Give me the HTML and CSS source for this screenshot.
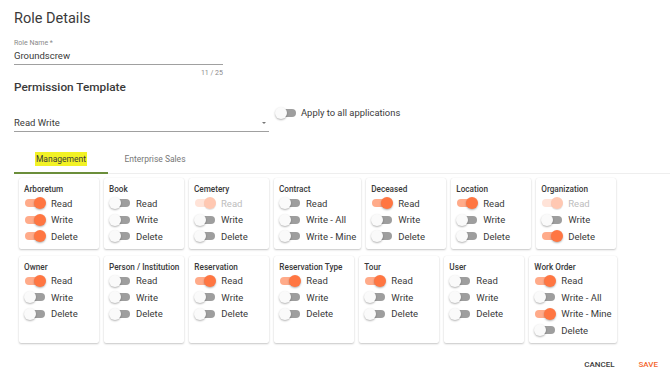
FILE: index.html
```html
<!DOCTYPE html>
<html lang="en">
<head>
    <meta charset="UTF-8">
    <meta name="viewport" content="width=device-width, initial-scale=1.0">
    <title>Role Details</title>
    <link rel="stylesheet" href="styles.css">
</head>
<body>
    <div class="page">
        <h1 class="title">Role Details</h1>

        <div class="field role-name">
            <label class="field-label">Role Name *</label>
            <div class="field-input">Groundscrew</div>
            <div class="counter">11 / 25</div>
        </div>

        <h2 class="subtitle">Permission Template</h2>

        <div class="template-row">
            <div class="field select">
                <div class="field-input">
                    <span>Read Write</span>
                    <span class="caret"></span>
                </div>
            </div>
            <div class="apply">
                <span class="switch"><span class="thumb"></span></span>
                <span class="apply-label">Apply to all applications</span>
            </div>
        </div>

        <div class="tabs">
            <div class="tab active"><span class="marker">Management</span></div>
            <div class="tab">Enterprise Sales</div>
        </div>

        <div class="cards">
            <!-- row 1 -->
            <div class="card">
                <div class="card-title">Arboretum</div>
                <div class="perm"><span class="switch on"><span class="thumb"></span></span>Read</div>
                <div class="perm"><span class="switch on"><span class="thumb"></span></span>Write</div>
                <div class="perm"><span class="switch on"><span class="thumb"></span></span>Delete</div>
            </div>
            <div class="card">
                <div class="card-title">Book</div>
                <div class="perm"><span class="switch"><span class="thumb"></span></span>Read</div>
                <div class="perm"><span class="switch"><span class="thumb"></span></span>Write</div>
                <div class="perm"><span class="switch"><span class="thumb"></span></span>Delete</div>
            </div>
            <div class="card">
                <div class="card-title">Cemetery</div>
                <div class="perm disabled"><span class="switch on"><span class="thumb"></span></span>Read</div>
                <div class="perm"><span class="switch"><span class="thumb"></span></span>Write</div>
                <div class="perm"><span class="switch"><span class="thumb"></span></span>Delete</div>
            </div>
            <div class="card">
                <div class="card-title">Contract</div>
                <div class="perm"><span class="switch"><span class="thumb"></span></span>Read</div>
                <div class="perm"><span class="switch"><span class="thumb"></span></span>Write - All</div>
                <div class="perm"><span class="switch"><span class="thumb"></span></span>Write - Mine</div>
            </div>
            <div class="card">
                <div class="card-title">Deceased</div>
                <div class="perm"><span class="switch on"><span class="thumb"></span></span>Read</div>
                <div class="perm"><span class="switch"><span class="thumb"></span></span>Write</div>
                <div class="perm"><span class="switch"><span class="thumb"></span></span>Delete</div>
            </div>
            <div class="card">
                <div class="card-title">Location</div>
                <div class="perm"><span class="switch on"><span class="thumb"></span></span>Read</div>
                <div class="perm"><span class="switch"><span class="thumb"></span></span>Write</div>
                <div class="perm"><span class="switch"><span class="thumb"></span></span>Delete</div>
            </div>
            <div class="card">
                <div class="card-title">Organization</div>
                <div class="perm disabled"><span class="switch on"><span class="thumb"></span></span>Read</div>
                <div class="perm"><span class="switch"><span class="thumb"></span></span>Write</div>
                <div class="perm"><span class="switch on"><span class="thumb"></span></span>Delete</div>
            </div>

            <!-- row 2 -->
            <div class="card">
                <div class="card-title">Owner</div>
                <div class="perm"><span class="switch on"><span class="thumb"></span></span>Read</div>
                <div class="perm"><span class="switch"><span class="thumb"></span></span>Write</div>
                <div class="perm"><span class="switch"><span class="thumb"></span></span>Delete</div>
            </div>
            <div class="card">
                <div class="card-title">Person / Institution</div>
                <div class="perm"><span class="switch"><span class="thumb"></span></span>Read</div>
                <div class="perm"><span class="switch"><span class="thumb"></span></span>Write</div>
                <div class="perm"><span class="switch"><span class="thumb"></span></span>Delete</div>
            </div>
            <div class="card">
                <div class="card-title">Reservation</div>
                <div class="perm"><span class="switch on"><span class="thumb"></span></span>Read</div>
                <div class="perm"><span class="switch"><span class="thumb"></span></span>Write</div>
                <div class="perm"><span class="switch"><span class="thumb"></span></span>Delete</div>
            </div>
            <div class="card">
                <div class="card-title">Reservation Type</div>
                <div class="perm"><span class="switch on"><span class="thumb"></span></span>Read</div>
                <div class="perm"><span class="switch"><span class="thumb"></span></span>Write</div>
                <div class="perm"><span class="switch"><span class="thumb"></span></span>Delete</div>
            </div>
            <div class="card">
                <div class="card-title">Tour</div>
                <div class="perm"><span class="switch on"><span class="thumb"></span></span>Read</div>
                <div class="perm"><span class="switch"><span class="thumb"></span></span>Write</div>
                <div class="perm"><span class="switch"><span class="thumb"></span></span>Delete</div>
            </div>
            <div class="card">
                <div class="card-title">User</div>
                <div class="perm"><span class="switch"><span class="thumb"></span></span>Read</div>
                <div class="perm"><span class="switch"><span class="thumb"></span></span>Write</div>
                <div class="perm"><span class="switch"><span class="thumb"></span></span>Delete</div>
            </div>
            <div class="card">
                <div class="card-title">Work Order</div>
                <div class="perm"><span class="switch on"><span class="thumb"></span></span>Read</div>
                <div class="perm"><span class="switch"><span class="thumb"></span></span>Write - All</div>
                <div class="perm"><span class="switch on"><span class="thumb"></span></span>Write - Mine</div>
                <div class="perm"><span class="switch"><span class="thumb"></span></span>Delete</div>
            </div>
        </div>

        <div class="actions">
            <button class="btn">Cancel</button>
            <button class="btn primary">Save</button>
        </div>
    </div>
</body>
</html>
```

FILE: styles.css
```css
body {
    margin: 0;
    font-family: Roboto, "Liberation Sans", Arial, sans-serif;
    color: #3a3a3a;
    background: #fff;
}

.page {
    padding: 9px 0 0 14px;
}

.title {
    margin: 0;
    font-size: 14.5px;
    font-weight: 400;
    line-height: 20px;
}

/* text fields */
.field {
    display: flex;
    flex-direction: column;
}

.role-name {
    width: 209px;
    margin-top: 9.5px;
}

.field-label {
    font-size: 7px;
    line-height: 9px;
    color: #8a8a8a;
}

.field-input {
    display: flex;
    align-items: center;
    justify-content: space-between;
    margin-top: 2.5px;
    padding-bottom: 2px;
    font-size: 9.5px;
    line-height: 12px;
    border-bottom: 1px solid #a0a0a0;
}

.counter {
    margin-top: 3.5px;
    font-size: 7px;
    line-height: 9px;
    color: #8a8a8a;
    text-align: right;
}

.subtitle {
    margin: 2px 0 0;
    font-size: 11.8px;
    font-weight: 500;
    line-height: 15px;
}

.template-row {
    display: flex;
    align-items: flex-start;
    gap: 7px;
}

.select {
    width: 255px;
    margin-top: 20px;
}

.caret {
    width: 0;
    height: 0;
    margin-right: 3px;
    border-left: 2.5px solid transparent;
    border-right: 2.5px solid transparent;
    border-top: 2.5px solid #777;
}

.apply {
    display: flex;
    align-items: center;
    gap: 5px;
    margin-top: 12px;
    font-size: 9.4px;
    line-height: 12px;
}

/* tabs */
.tabs {
    display: flex;
    margin-top: 14px;
    border-bottom: 1px solid #eee;
}

.tab {
    width: 94px;
    height: 26px;
    display: flex;
    align-items: center;
    justify-content: center;
    font-size: 8.5px;
    color: #777;
    border-bottom: 2px solid transparent;
    margin-bottom: -1px;
}

.tab.active {
    border-bottom-color: #6b8e3a;
    color: #3a3a3a;
}

.marker {
    background: #f2f225;
    padding: 2px 1px;
}

/* permission cards */
.cards {
    display: flex;
    flex-wrap: wrap;
    gap: 7px 5px;
    margin-top: 4px;
    padding-left: 5px;
}

.card {
    min-width: 70px;
    padding: 5px 5px 4px;
    background: #fff;
    border-radius: 2px;
    box-shadow: 0 1px 2px rgba(0, 0, 0, 0.22), 0 0 1px rgba(0, 0, 0, 0.08);
}

.card-title {
    font-size: 8.2px;
    font-weight: 500;
    line-height: 12px;
    white-space: nowrap;
}

.perm {
    display: flex;
    align-items: center;
    gap: 6px;
    height: 16.5px;
    padding-left: 1px;
    font-size: 9.5px;
    white-space: nowrap;
}

.perm.disabled {
    color: #bdbdbd;
}

/* switch */
.switch {
    display: flex;
    align-items: center;
    flex-shrink: 0;
    width: 20px;
    height: 8px;
    border-radius: 4px;
    background: #9e9e9e;
}

.thumb {
    width: 12px;
    height: 12px;
    margin-left: -1px;
    border-radius: 50%;
    background: #fafafa;
    box-shadow: 0 1px 2px rgba(0, 0, 0, 0.3);
}

.switch.on {
    background: #ffab8a;
}

.switch.on .thumb {
    margin-left: auto;
    margin-right: -1px;
    background: #ff7642;
}

.disabled .switch.on {
    background: #ffe3d8;
}

.disabled .switch.on .thumb {
    background: #ffc8b2;
    box-shadow: 0 1px 1px rgba(0, 0, 0, 0.12);
}

/* buttons */
.actions {
    display: flex;
    justify-content: flex-end;
    gap: 8px;
    margin-top: 11.5px;
    padding-right: 4px;
}

.btn {
    height: 21px;
    padding: 0 8px;
    border: none;
    background: none;
    font-family: inherit;
    font-size: 8px;
    font-weight: 500;
    text-transform: uppercase;
    color: #3a3a3a;
    cursor: pointer;
}

.btn.primary {
    color: #f4662d;
}
```
